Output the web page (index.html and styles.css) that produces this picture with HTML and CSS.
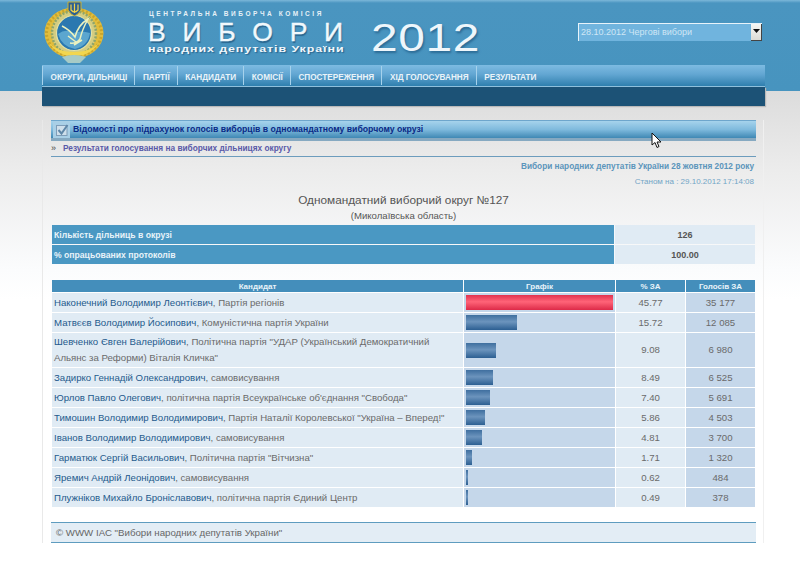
FILE: index.html
```html
<!DOCTYPE html>
<html lang="uk">
<head>
<meta charset="utf-8">
<title>Вибори народних депутатів України 2012</title>
<link rel="stylesheet" href="styles.css">
</head>
<body>
<header class="hero">
  <div class="hero-inner">
    <div class="brand-row">
      <svg class="emblem" width="60" height="64" viewBox="0 0 60 64">
        <ellipse cx="30" cy="33" rx="29.5" ry="25.5" fill="#e2bd3c"/>
        <ellipse cx="30" cy="33" rx="27.5" ry="23.5" fill="none" stroke="#c9a52c" stroke-width="3" stroke-dasharray="2 2"/>
        <ellipse cx="30" cy="33" rx="22.5" ry="22" fill="#d5cd80"/>
        <circle cx="30" cy="33" r="22" fill="none" stroke="#8ea56a" stroke-width="2.5" stroke-dasharray="2 1.5"/>
        <path d="M5 43Q16 58 30 55Q44 58 55 43Q46 52 30 52Q14 52 5 43Z" fill="#f2d64e"/>
        <circle cx="30" cy="33" r="17.5" fill="#2a78b0" stroke="#e4e2a4" stroke-width="1.2"/>
        <path d="M14 34Q22 28 29 33Q37 30 46 33Q44 46 31 49Q18 47 14 34Z" fill="#5ba6cf"/>
        <path d="M18 26Q26 30 31 37Q34 25 44 19Q38 30 36 39Q32 44 26 43M24 36L32 42M30 45L38 40" fill="none" stroke="#eaf2c0" stroke-width="1.5"/>
        <path d="M24 2H37V10Q34 15 30.5 16Q27 15 24 10Z" fill="#2b5f92" stroke="#c7b23a"/>
        <path d="M27 4.5V10Q30.5 14 34 10V4.5M30.5 3.5V13" fill="none" stroke="#f0d24a" stroke-width="1.2"/>
        <path d="M18 57Q30 53 42 57L36 63H24Z" fill="#a7cbc6"/>
      </svg>
      <div class="title-block">
        <div class="cvk">ЦЕНТРАЛЬНА ВИБОРЧА КОМІСІЯ</div>
        <div class="vybory">ВИБОРИ</div>
        <div class="deputies">народних депутатів України</div>
      </div>
      <div class="year">2012</div>
      <div class="select-box">
        <span class="select-value">28.10.2012 Чергові вибори</span>
        <span class="select-btn"><svg width="7" height="4" viewBox="0 0 7 4"><path d="M0 0H7L3.5 4Z" fill="#111"/></svg></span>
      </div>
    </div>
    <nav class="nav">
      <a class="nav-item">ОКРУГИ, ДІЛЬНИЦІ</a>
      <a class="nav-item">ПАРТІЇ</a>
      <a class="nav-item">КАНДИДАТИ</a>
      <a class="nav-item">КОМІСІЇ</a>
      <a class="nav-item">СПОСТЕРЕЖЕННЯ</a>
      <a class="nav-item">ХІД ГОЛОСУВАННЯ</a>
      <a class="nav-item">РЕЗУЛЬТАТИ</a>
    </nav>
    <div class="strip"></div>
  </div>
</header>

<main class="panel">
  <div class="section-bar">
    <span class="check">
      <svg width="14" height="14" viewBox="0 0 14 14"><rect x="1.5" y="2.5" width="10.5" height="10" fill="#cfdfeb" stroke="#7f9db8"/><path d="M3.5 7L6.5 10.5L12.5 2" fill="none" stroke="#5f87a8" stroke-width="2"/></svg>
    </span>
    <h1 class="section-title">Відомості про підрахунок голосів виборців в одномандатному виборчому окрузі</h1>
  </div>
  <div class="crumb"><span class="crumb-mark">»</span><a class="crumb-link">Результати голосування на виборчих дільницях округу</a></div>
  <div class="meta-main">Вибори народних депутатів України 28 жовтня 2012 року</div>
  <div class="meta-date">Станом на : 29.10.2012 17:14:08</div>
  <h2 class="okrug">Одномандатний виборчий округ №127</h2>
  <div class="oblast">(Миколаївська область)</div>

  <table class="info">
    <tr><th>Кількість дільниць в окрузі</th><td>126</td></tr>
    <tr><th>% опрацьованих протоколів</th><td>100.00</td></tr>
  </table>

  <table class="results">
    <thead>
      <tr><th class="c-name">Кандидат</th><th class="c-graph">Графік</th><th class="c-pct">% ЗА</th><th class="c-votes">Голосів ЗА</th></tr>
    </thead>
    <tbody>
      <tr><td class="c-name"><a>Наконечний Володимир Леонтієвич</a>, Партія регіонів</td><td class="c-graph"><div class="bar bar-red" style="width:147px"></div></td><td class="c-pct">45.77</td><td class="c-votes">35 177</td></tr>
      <tr><td class="c-name"><a>Матвєєв Володимир Йосипович</a>, Комуністична партія України</td><td class="c-graph"><div class="bar" style="width:51px"></div></td><td class="c-pct">15.72</td><td class="c-votes">12 085</td></tr>
      <tr><td class="c-name"><a>Шевченко Євген Валерійович</a>, Політична партія "УДАР (Український Демократичний Альянс за Реформи) Віталія Кличка"</td><td class="c-graph"><div class="bar" style="width:30px"></div></td><td class="c-pct">9.08</td><td class="c-votes">6 980</td></tr>
      <tr><td class="c-name"><a>Задирко Геннадій Олександрович</a>, самовисування</td><td class="c-graph"><div class="bar" style="width:27px"></div></td><td class="c-pct">8.49</td><td class="c-votes">6 525</td></tr>
      <tr><td class="c-name"><a>Юрлов Павло Олегович</a>, політична партія Всеукраїнське об'єднання "Свобода"</td><td class="c-graph"><div class="bar" style="width:24px"></div></td><td class="c-pct">7.40</td><td class="c-votes">5 691</td></tr>
      <tr><td class="c-name"><a>Тимошин Володимир Володимирович</a>, Партія Наталії Королевської "Україна – Вперед!"</td><td class="c-graph"><div class="bar" style="width:19px"></div></td><td class="c-pct">5.86</td><td class="c-votes">4 503</td></tr>
      <tr><td class="c-name"><a>Іванов Володимир Володимирович</a>, самовисування</td><td class="c-graph"><div class="bar" style="width:16px"></div></td><td class="c-pct">4.81</td><td class="c-votes">3 700</td></tr>
      <tr><td class="c-name"><a>Гарматюк Сергій Васильович</a>, Політична партія "Вітчизна"</td><td class="c-graph"><div class="bar" style="width:6px"></div></td><td class="c-pct">1.71</td><td class="c-votes">1 320</td></tr>
      <tr><td class="c-name"><a>Яремич Андрій Леонідович</a>, самовисування</td><td class="c-graph"><div class="bar" style="width:2px"></div></td><td class="c-pct">0.62</td><td class="c-votes">484</td></tr>
      <tr><td class="c-name"><a>Плужніков Михайло Броніславович</a>, політична партія Єдиний Центр</td><td class="c-graph"><div class="bar" style="width:2px"></div></td><td class="c-pct">0.49</td><td class="c-votes">378</td></tr>
    </tbody>
  </table>

  <footer class="foot">© WWW ІАС "Вибори народних депутатів України"</footer>
  <svg class="cursor" width="12" height="17" viewBox="0 0 12 17"><path d="M1 1V13L4 10.5L6 15.5L8 14.5L6 10H10Z" fill="#fff" stroke="#111" stroke-width="1"/></svg>
</main>
</body>
</html>
```

FILE: styles.css
```css
* { box-sizing: border-box; }
html, body { margin: 0; padding: 0; }
body {
  font-family: "Liberation Sans", Arial, sans-serif;
  background: linear-gradient(#dcdcdc 91px, #ececec 170px, #fbfcfd 270px, #ffffff 300px);
  min-height: 565px;
  overflow: hidden;
}

/* header */
.hero {
  height: 91px;
  background: linear-gradient(#7cb7d9 0, #4a95c0 3px, #4794bf 100%);
}
.hero-inner { margin: 0 35px 0 42px; }
.brand-row { height: 65px; position: relative; display: flex; }
.emblem { margin: 0 0 0 2px; flex: none; }
.title-block { margin-left: 44px; padding-top: 10px; width: 223px; flex: none; }
.cvk {
  font-size: 6.5px;
  font-weight: bold;
  color: #e6f1f7;
  letter-spacing: 2.55px;
  line-height: 8px;
  padding-left: 1px;
  white-space: nowrap;
}
.vybory {
  font-size: 26.5px;
  line-height: 24px;
  margin-top: 2px;
  color: #f1f8fc;
  letter-spacing: 16.8px;
  white-space: nowrap;
  -webkit-text-stroke: 0.4px #f1f8fc;
  text-shadow: 1px 2px 1px #2a668f;
}
.deputies {
  font-size: 9.5px;
  font-weight: bold;
  line-height: 10px;
  margin-top: 0;
  color: #f1f7fb;
  letter-spacing: 0.7px;
  white-space: nowrap;
  text-shadow: 1px 1px 1px #2a668f;
  transform: scaleX(1.31);
  transform-origin: left center;
}
.year {
  margin: 19px 0 0;
  font-size: 38px;
  line-height: 38px;
  letter-spacing: 0.5px;
  color: #eef6fb;
  text-shadow: 1px 2px 2px #2b6a94;
  flex: none;
  transform: scaleX(1.26);
  transform-origin: left center;
}
.select-box {
  position: absolute;
  left: 536px;
  top: 23px;
  width: 184px;
  height: 18px;
  display: flex;
  background: #70b4de;
  border-top: 1px solid #e8f3fa;
  border-left: 1px solid #e8f3fa;
}
.select-value {
  flex: 1;
  font-size: 9px;
  line-height: 16px;
  padding-left: 2px;
  color: #cfe6f5;
}
.select-btn {
  width: 11px;
  background: linear-gradient(#f7f7f4, #dcdcd6);
  border-right: 1px solid #444;
  border-bottom: 1px solid #444;
  display: flex;
  align-items: center;
  justify-content: center;
  padding-bottom: 3px;
}
.nav {
  height: 22px;
  display: flex;
  align-items: flex-start;
  background: linear-gradient(#7dbbe2, #62a6d2 45%, #2f7fae);
  border-bottom: 1px solid #8fc0dc;
  position: relative;
}
.nav-item {
  font-size: 8.2px;
  font-weight: bold;
  color: #e9f3f9;
  line-height: 14px;
  height: 19px;
  margin-top: 1px;
  padding: 5px 7.6px 0;
  margin-right: -0.5px;
  border-left: 1px solid #a6d2ec;
  white-space: nowrap;
}
.strip {
  height: 19px;
  background: #1c5276;
  box-shadow: 1px 1px 1px #b9b9b9;
  position: relative;
}

/* content panel */
.panel {
  position: relative;
  margin: 29px 36px 0 42px;
  height: 423px;
  padding: 0 7px 0 8px;
  border-left: 1px solid #e9e9e9;
  border-right: 1px solid #f0f0f0;
}
.section-bar {
  height: 21px;
  display: flex;
  align-items: center;
  border-top: 1px solid #6ea6cc;
  border-bottom: 3px solid #86a9c1;
  background: linear-gradient(#a6d3ec, #7fbadd 50%, #3f88b4);
}
.check {
  width: 17px;
  height: 17px;
  display: flex;
  align-items: center;
  justify-content: center;
  background: #a9cfe6;
  margin-left: 2px;
  flex: none;
}
.section-title {
  margin: 0 0 0 3px;
  font-size: 8.7px;
  line-height: 17px;
  font-weight: bold;
  color: #0a2a86;
  white-space: nowrap;
}
.crumb {
  height: 16px;
  font-size: 8.3px;
  line-height: 15px;
  font-weight: bold;
  border-bottom: 1px solid #6c9cbd;
  display: flex;
}
.crumb-mark { color: #444; width: 12px; font-size: 9px; font-weight: normal; }
.crumb-link { color: #5a5aa8; }
.meta-main {
  text-align: right;
  padding-right: 2px;
  font-size: 8.25px;
  font-weight: bold;
  line-height: 10px;
  margin-top: 5px;
  color: #5b95bb;
}
.meta-date {
  text-align: right;
  padding-right: 2px;
  font-size: 8px;
  line-height: 10px;
  margin-top: 5px;
  color: #72a5c6;
}
.okrug {
  margin: 6px 0 0;
  text-align: center;
  font-size: 11.8px;
  line-height: 14px;
  font-weight: normal;
  color: #555;
}
.oblast {
  text-align: center;
  font-size: 9.6px;
  line-height: 11px;
  margin-top: 3px;
  color: #555;
}
.info {
  width: 703px;
  margin: 3px 0 0 1px;
  border-collapse: separate;
  border-spacing: 0 1px;
  table-layout: fixed;
}
.info th {
  width: 562px;
  height: 19px;
  padding: 0 2px;
  background: #4a98c3;
  color: #e8f3f9;
  font-size: 8.65px;
  font-weight: bold;
  text-align: left;
}
.info td {
  background: #e0ebf4;
  color: #555;
  font-size: 9px;
  font-weight: bold;
  text-align: center;
  border-left: 1px solid #f4f8fb;
}
.results {
  width: 705px;
  margin: 14px 0 0;
  border-collapse: separate;
  border-spacing: 1px;
  table-layout: fixed;
}
.results th {
  height: 12px;
  padding: 0;
  background: #448ebb;
  color: #e8f3f9;
  font-size: 8px;
  font-weight: bold;
  text-align: center;
}
.results td {
  height: 19px;
  padding: 1px 2px;
  font-size: 9.65px;
  line-height: 16px;
  color: #6a6a6a;
  background: #e0ebf4;
}
.results td.c-name { padding-right: 8px; }
.results a { color: #245a8c; }
.results .c-name { width: 411px; }
.results .c-graph { width: 151px; }
.results .c-pct { width: 69px; text-align: center; }
.results .c-votes { width: 69px; text-align: center; }
.results td.c-graph, .results td.c-votes { background: #c5d7ea; }
.bar {
  height: 15px;
  background: linear-gradient(#3f6f9f, #6c94bd 45%, #2c5f92);
}
.bar-red {
  background: linear-gradient(#e0324e, #ff6478 45%, #dd2a48);
}
.foot {
  margin-top: 14px;
  height: 21px;
  border-top: 1px solid #5e9cbf;
  border-bottom: 1px solid #5e9cbf;
  background: #e3edf5;
  padding-left: 5px;
  font-size: 9.7px;
  line-height: 19px;
  color: #666;
}
.cursor {
  position: absolute;
  left: 608px;
  top: 12px;
}
```
